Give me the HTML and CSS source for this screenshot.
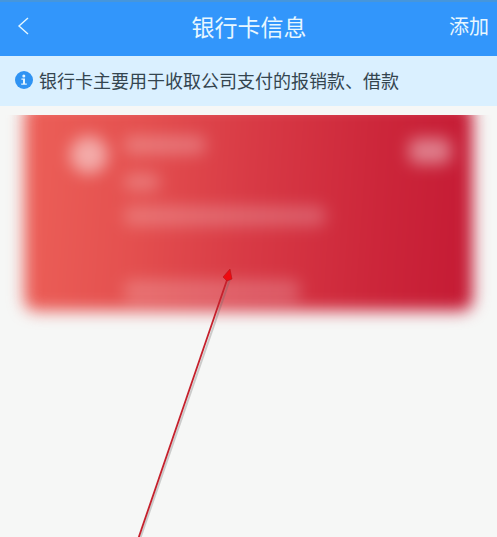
FILE: index.html
```
<!DOCTYPE html>
<html lang="zh-CN">
<head>
    <meta charset="UTF-8">
    <meta name="viewport" content="width=device-width, initial-scale=1">
    <title>银行卡信息</title>
    <link rel="stylesheet" href="styles.css">
</head>
<body>
<header class="header">
    <button class="back" type="button" aria-label="返回">
        <svg width="12" height="18" viewBox="0 0 12 18">
            <path d="M11 1 L2 9 L11 17" fill="none" stroke="#e4f7ff" stroke-width="1.4"/>
        </svg>
    </button>
    <h1 class="title">银行卡信息</h1>
    <button class="add" type="button">添加</button>
</header>
<div class="notice">
    <svg class="info" width="18" height="18" viewBox="0 0 18 18">
        <circle cx="9" cy="9" r="9" fill="#2f93f3"/>
        <circle cx="8.8" cy="4.9" r="1.5" fill="#e2f4ff"/>
        <path d="M6.4 7.4 H10 V12.4 H11.8 V13.8 H6.2 V12.4 H8 V8.8 H6.4 Z" fill="#e2f4ff"/>
    </svg>
    <p>银行卡主要用于收取公司支付的报销款、借款</p>
</div>
<main class="content">
    <div class="card-box">
        <!-- 卡片信息模糊处理 -->
        <div class="card">
            <span class="logo"></span>
            <div class="lines">
                <span class="name"></span>
                <span class="type"></span>
                <span class="number"></span>
                <span class="bank"></span>
            </div>
            <span class="tag"></span>
        </div>
    </div>
    <svg class="arrow" width="104" height="280" viewBox="0 0 104 280">
        <path d="M5 282 L95 22" stroke="#666" stroke-opacity="0.3" stroke-width="2"/>
        <path d="M3.5 281 L93 20" stroke="#c5202c" stroke-width="1.8"/>
        <path d="M95 12 L97 22 L92 24 L88 20 Z" fill="#ee0a10" stroke="#b5121a" stroke-width="0.6"/>
    </svg>
</main>
</body>
</html>
```

FILE: styles.css
```
* {
    margin: 0;
    padding: 0;
    box-sizing: border-box;
}

body {
    min-height: 100vh;
    display: flex;
    flex-direction: column;
    background-color: #f6f7f6;
    font-family: "Noto Sans CJK SC", sans-serif;
}

button {
    border: none;
    background: none;
    color: inherit;
    font-family: inherit;
    cursor: pointer;
}

.header {
    display: grid;
    grid-template-columns: 1fr auto 1fr;
    align-items: center;
    height: 56px;
    padding: 0 8px 6px 17px;
    border-top: 2px solid #4696dc;
    background-color: #3296fb;
    color: #e8f7ff;
}

.back {
    justify-self: start;
    display: flex;
    padding: 4px 0;
}

.title {
    padding-right: 8px;
    font-size: 23px;
    line-height: 32px;
    font-weight: 400;
}

.add {
    justify-self: end;
    font-size: 20px;
    line-height: 32px;
}

.notice {
    display: flex;
    align-items: center;
    gap: 6px;
    min-height: 50px;
    padding: 0 15px 3px;
    background-color: #daf0ff;
    color: #34454f;
    font-size: 18px;
    line-height: 24px;
}

.info {
    flex: none;
}

.content {
    position: relative;
    flex: 1;
    padding-top: 9px;
    overflow: hidden;
}

/* 上边缘裁切，其余三边保留模糊 */
.card-box {
    padding: 0 24px 24px;
    overflow: hidden;
}

.card {
    display: flex;
    align-items: flex-start;
    height: 208px;
    margin-top: -12px;
    padding: 33px 22px 10px 46px;
    border-radius: 12px;
    background-image: linear-gradient(94deg, #ec6058 0%, #e4504f 25%, #d83a45 50%, #cc263a 78%, #c41a34 100%);
    filter: blur(8px);
}

.card span {
    display: block;
    border-radius: 8px;
    background-color: #fff;
    opacity: 0.26;
}

.card .logo {
    width: 38px;
    height: 38px;
    border-radius: 50%;
    opacity: 0.5;
}

.lines {
    flex: 1;
    padding-left: 16px;
}

.lines .name {
    width: 82px;
    height: 18px;
}

.lines .type {
    width: 36px;
    height: 16px;
    margin-top: 20px;
}

.lines .number {
    width: 202px;
    height: 20px;
    margin-top: 16px;
    opacity: 0.22;
}

.lines .bank {
    width: 176px;
    height: 22px;
    margin-top: 54px;
    opacity: 0.22;
}

.card .tag {
    width: 42px;
    height: 26px;
    margin-top: 2px;
    opacity: 0.42;
}

/* 指向卡片的箭头 */
.arrow {
    position: absolute;
    top: 151px;
    left: 135px;
}
```
